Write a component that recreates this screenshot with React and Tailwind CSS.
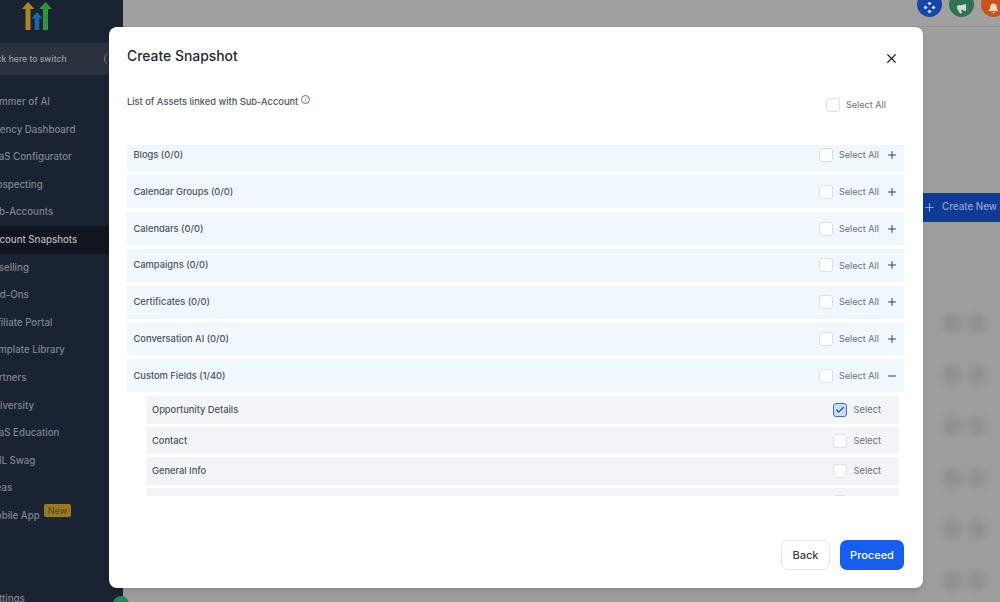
import { Plus, Minus, X, Check, Megaphone, Bell } from "lucide-react";

const navItems = [
  "Summer of AI",
  "Agency Dashboard",
  "SaaS Configurator",
  "Prospecting",
  "Sub-Accounts",
  "Account Snapshots",
  "Reselling",
  "Add-Ons",
  "Affiliate Portal",
  "Template Library",
  "Partners",
  "University",
  "SaaS Education",
  "GHL Swag",
  "Ideas",
  "Mobile App",
];

const assets = [
  "Blogs (0/0)",
  "Calendar Groups (0/0)",
  "Calendars (0/0)",
  "Campaigns (0/0)",
  "Certificates (0/0)",
  "Conversation AI (0/0)",
];

const fields = [
  { name: "Opportunity Details", checked: true },
  { name: "Contact" },
  { name: "General Info" },
  { name: "" },
];

function Logo() {
  return (
    <svg width="30" height="31" viewBox="0 0 30 31" fill="none">
      <path d="M6 2 L12.5 9 H8.5 V30 H3.5 V9 H0 Z" fill="#b0841f" />
      <path d="M15 12 L20.5 18.5 H17.3 V30 H12.7 V18.5 H9.5 Z" fill="#1a66b3" />
      <path d="M23.5 2 L30 9 H26 V30 H21 V9 H17 Z" fill="#2c9638" />
    </svg>
  );
}

function Sidebar() {
  return (
    <aside className="flex h-full w-[123px] shrink-0 flex-col overflow-hidden bg-[#1a2331] text-[9.7px] font-medium text-[#7f848d]">
      <div className="flex h-[43px] shrink-0 pl-[22px]">
        <Logo />
      </div>
      <div className="flex h-[32px] shrink-0 items-center justify-between bg-[#2c323d] pr-[13px] text-[8.6px] text-[#9a9ea6]">
        <span className="-ml-[14px] whitespace-nowrap">Click here to switch</span>
        <span className="h-[12px] w-[6px] rounded-l-full border-l border-[#777c85]" />
      </div>
      <nav className="mt-[13.5px] flex flex-col">
        {navItems.map((item) => (
          <div
            key={item}
            className={`flex h-[27.6px] items-center gap-[4px] whitespace-nowrap ${
              item === "Account Snapshots" ? "bg-[#10151f] text-[#b4b7bd]" : ""
            }`}
          >
            <span className="-ml-[13px]">{item}</span>
            {item === "Mobile App" && (
              <span className="-mt-[11px] rounded-[2px] bg-[#9a7a20] px-[4px] text-[9px] leading-[13px] text-[#5d4a15]">
                New
              </span>
            )}
          </div>
        ))}
      </nav>
      <div className="mt-auto -mb-[5px] -ml-[13px]">Settings</div>
    </aside>
  );
}

function Background() {
  return (
    <div className="flex h-full flex-1 flex-col overflow-hidden bg-[#9e9e9e]">
      <div className="-mr-[6px] flex h-[27px] shrink-0 items-start justify-end gap-[7px] border-b border-[#939393] bg-[#a0a0a0]">
        <span className="-mt-[8px] flex h-[25px] w-[25px] items-center justify-center rounded-full bg-[#1546a8]">
          <svg width="13" height="13" viewBox="0 0 13 13" className="mt-[7px]" fill="#cfd9ee">
            <rect x="5" y="0" width="3" height="3" transform="rotate(45 6.5 1.5)" />
            <rect x="1" y="4" width="3" height="3" transform="rotate(45 2.5 5.5)" />
            <rect x="9" y="4" width="3" height="3" transform="rotate(45 10.5 5.5)" />
            <rect x="5" y="8" width="3" height="3" transform="rotate(45 6.5 9.5)" />
          </svg>
        </span>
        <span className="-mt-[8px] flex h-[25px] w-[25px] items-center justify-center rounded-full bg-[#2d7358]">
          <Megaphone size={11} className="mt-[7px] text-[#cfdcd6]" fill="#cfdcd6" />
        </span>
        <span className="-mt-[8px] flex h-[25px] w-[25px] items-center justify-center rounded-full bg-[#c6551b]">
          <Bell size={11} className="mt-[7px] text-[#eed5c6]" fill="#eed5c6" />
        </span>
      </div>
      <div className="mt-[166px] flex justify-end">
        <div className="flex h-[29px] w-[77px] items-center gap-[6px] whitespace-nowrap bg-[#103a96] text-[9.8px] font-medium text-[#8ba3d6]">
          <Plus size={13} />
          <span>Create New</span>
        </div>
      </div>
      <div className="mt-[91px] flex flex-col gap-[31.5px] pl-[820px]">
        {[0, 1, 2, 3, 4, 5].map((n) => (
          <div key={n} className="flex gap-[7px]">
            <span className="h-[20px] w-[18px] rounded-full bg-[#8f8f8f] blur-[4px]" />
            <span className="h-[20px] w-[18px] rounded-full bg-[#8f8f8f] blur-[4px]" />
          </div>
        ))}
      </div>
    </div>
  );
}

function Checkbox({ checked }) {
  if (checked) {
    return (
      <span className="flex h-[14px] w-[14px] items-center justify-center rounded-[3px] border border-[#3f74c9] bg-[#c9dcf6] text-[#1d4f9c]">
        <Check size={10} strokeWidth={3} />
      </span>
    );
  }
  return <span className="h-[14px] w-[14px] rounded-[3px] border border-[#dcdfe4] bg-white" />;
}

function AssetRow({ label, open }) {
  return (
    <div className="flex h-[33px] shrink-0 items-center justify-between bg-[#f0f7fd] pl-[6.5px] pr-[6px]">
      <span className="text-[9.3px] font-medium text-[#4b5563]">{label}</span>
      <div className="flex items-center">
        <Checkbox />
        <span className="ml-[6px] text-[9.1px] text-[#6b7280]">Select All</span>
        {open ? (
          <Minus size={12} className="ml-[7px] text-[#374151]" />
        ) : (
          <Plus size={12} className="ml-[7px] text-[#374151]" />
        )}
      </div>
    </div>
  );
}

function FieldRow({ field }) {
  return (
    <div className="flex h-[27.5px] shrink-0 items-center justify-between bg-[#f2f4f7] pl-[6px] pr-[18px]">
      <span className="text-[9.3px] font-medium text-[#4b5563]">{field.name}</span>
      <div className="flex items-center">
        <Checkbox checked={field.checked} />
        <span className="ml-[7px] text-[9.3px] text-[#6b7280]">Select</span>
      </div>
    </div>
  );
}

function SnapshotModal() {
  return (
    <div className="absolute left-[109px] top-[27px] flex h-[561px] w-[814px] flex-col rounded-[8px] bg-white pl-[18px] pr-[19px] shadow-md">
      <div className="flex h-[58px] shrink-0 items-center justify-between">
        <h2 className="text-[13.9px] font-medium text-[#1f2937]">Create Snapshot</h2>
        <X size={15} strokeWidth={2} className="mr-[5.5px] mt-[4px] text-[#1f2937]" />
      </div>
      <div className="mt-[8px] flex h-[24px] shrink-0 items-start justify-between">
        <div className="flex items-start gap-[3px] pt-[2px]">
          <span className="text-[9.3px] font-medium text-[#4b5563]">List of Assets linked with Sub-Account</span>
          <span className="flex h-[9px] w-[9px] items-center justify-center rounded-full border border-[#6b7280] text-[6px] leading-none text-[#6b7280]">
            i
          </span>
        </div>
        <div className="mr-[18px] mt-[5px] flex items-center">
          <Checkbox />
          <span className="ml-[6px] text-[9.1px] text-[#6b7280]">Select All</span>
        </div>
      </div>
      <div className="mt-[28px] flex h-[351px] shrink-0 flex-col overflow-hidden">
        <div className="-mt-[6.5px] flex flex-col gap-[3.8px]">
          {assets.map((label) => (
            <AssetRow key={label} label={label} />
          ))}
          <AssetRow label="Custom Fields (1/40)" open />
          <div className="ml-[19px] mr-[5px] flex flex-col gap-[3.2px]">
            {fields.map((field) => (
              <FieldRow key={field.name || "more"} field={field} />
            ))}
          </div>
        </div>
      </div>
      <div className="mt-auto mb-[18px] flex justify-end gap-[10px]">
        <button className="h-[30px] w-[49px] rounded-[7px] border border-[#e2e5e9] bg-white text-[11px] font-medium text-[#374151]">
          Back
        </button>
        <button className="h-[30px] w-[64px] rounded-[7px] bg-[#155eef] text-[11px] font-medium text-white">
          Proceed
        </button>
      </div>
    </div>
  );
}

export default function App() {
  return (
    <div className="relative flex h-[602px] w-[1000px] overflow-hidden font-['Inter',sans-serif]">
      <Sidebar />
      <Background />
      <SnapshotModal />
      {/* status dot sitting on the sidebar edge, under the modal */}
      <span className="absolute left-[113px] top-[596px] h-[16px] w-[16px] rounded-full bg-[#1f8a5a]" />
    </div>
  );
}
